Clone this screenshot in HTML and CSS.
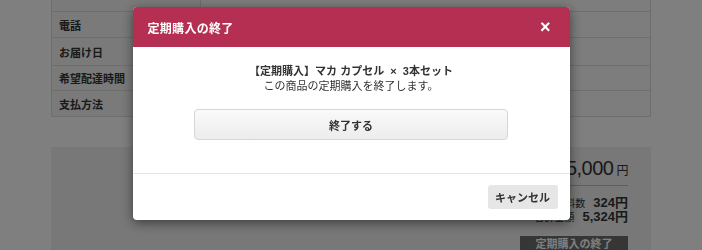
FILE: index.html
```html
<!DOCTYPE html>
<html lang="ja">
<head>
    <meta charset="UTF-8">
    <meta name="viewport" content="width=device-width, initial-scale=1.0">
    <title>定期購入の終了</title>
    <link rel="stylesheet" href="styles.css">
</head>
<body>
    <div class="page">
        <table class="info">
            <tr><th></th><td></td></tr>
            <tr><th>電話</th><td></td></tr>
            <tr class="tall"><th>お届け日</th><td></td></tr>
            <tr class="short"><th>希望配達時間</th><td></td></tr>
            <tr><th>支払方法</th><td></td></tr>
        </table>
        <div class="summary">
            <div class="sum-col">
                <div class="sum-total">
                    <span class="label">商品小計</span>
                    <span class="price">5,000<small>円</small></span>
                </div>
                <div class="sum-row"><span class="label">送料数</span><span class="amount">324円</span></div>
                <div class="sum-row"><span class="label">合計金額</span><span class="amount">5,324円</span></div>
                <button class="stop-btn">定期購入の終了</button>
            </div>
        </div>
    </div>

    <div class="overlay">
        <div class="modal">
            <div class="modal-header">
                <h2>定期購入の終了</h2>
                <button class="close">&times;</button>
            </div>
            <div class="modal-body">
                <p class="product">【定期購入】マカ カプセル &nbsp;× &nbsp;3本セット</p>
                <p class="note">この商品の定期購入を終了します。</p>
                <button class="confirm-btn">終了する</button>
            </div>
            <div class="modal-footer">
                <button class="cancel-btn">キャンセル</button>
            </div>
        </div>
    </div>
</body>
</html>
```

FILE: styles.css
```css
body {
    margin: 0;
    background: #fff;
    color: #333;
    font-family: "Liberation Sans", "Noto Sans CJK JP", sans-serif;
    font-size: 11px;
    height: 250px;
    overflow: hidden;
}
.page {
    width: 600px;
    margin: -15px 0 0 51px;
}
.info {
    width: 100%;
    border-collapse: collapse;
}
.info th, .info td {
    height: 25px;
    border: 1px solid #dcdcdc;
    padding: 0 7px;
}
.info .tall th, .info .tall td {
    height: 27px;
}
.info .short th, .info .short td {
    height: 24px;
}
.info th {
    width: 134px;
    background: #f5f5f5;
    text-align: left;
    font-weight: bold;
}
.info td {
    background: #fbfbfb;
}
.summary {
    margin-top: 30px;
    background: #f1f1f1;
    height: 104px;
    padding: 10px 23px 0 0;
    display: flex;
    justify-content: flex-end;
}
.sum-col {
    width: 260px;
    display: flex;
    flex-direction: column;
    align-items: flex-end;
}
.sum-total {
    align-self: stretch;
    display: flex;
    justify-content: space-between;
    align-items: baseline;
    border-bottom: 1px solid #bbb;
    padding-bottom: 5px;
    margin-bottom: 10px;
}
.price {
    font-size: 20px;
    letter-spacing: -0.5px;
}
.price small {
    font-size: 12px;
    margin-left: 3px;
}
.sum-row {
    display: flex;
    align-items: baseline;
    gap: 8px;
    line-height: 13px;
}
.sum-row .label {
    font-size: 10px;
}
.amount {
    font-size: 13px;
    font-weight: bold;
}
.stop-btn {
    margin-top: 12px;
    width: 108px;
    height: 17px;
    line-height: 15px;
    padding: 0;
    border: none;
    background: #6c6c6c;
    color: #fff;
    font-family: inherit;
    font-size: 11px;
    font-weight: bold;
}

.overlay {
    position: fixed;
    top: 0;
    left: 0;
    right: 0;
    bottom: 0;
    background: rgba(0, 0, 0, 0.5);
    display: flex;
    justify-content: center;
    align-items: flex-start;
    padding-top: 7px;
}
.modal {
    width: 437px;
    background: #fff;
    border-radius: 4px;
    box-shadow: 0 3px 12px rgba(0, 0, 0, 0.5);
    overflow: hidden;
}
.modal-header {
    height: 40px;
    background: #b52f52;
    display: flex;
    align-items: center;
    justify-content: space-between;
    padding: 0 19px 0 15px;
}
.modal-header h2 {
    margin: 0;
    color: #fff;
    font-size: 12px;
    font-weight: bold;
    letter-spacing: 0.3px;
}
.close {
    border: none;
    background: none;
    color: #fff;
    font-family: inherit;
    font-size: 18px;
    font-weight: bold;
    padding: 0;
    line-height: 1;
}
.modal-body {
    padding: 17px 0 33px;
    text-align: center;
}
.modal-body p {
    margin: 0;
    line-height: 15px;
    font-size: 11px;
}
.product {
    font-weight: bold;
}
.confirm-btn {
    margin-top: 15px;
    width: 314px;
    height: 31px;
    border: 1px solid #d6d6d6;
    border-radius: 4px;
    background: linear-gradient(#fafafa, #ececec);
    color: #333;
    font-family: inherit;
    font-size: 11px;
    font-weight: bold;
}
.modal-footer {
    border-top: 1px solid #e5e5e5;
    padding: 11px 12px;
    display: flex;
    justify-content: flex-end;
}
.cancel-btn {
    width: 70px;
    height: 24px;
    border: none;
    border-radius: 3px;
    background: #e6e6e6;
    color: #333;
    font-family: inherit;
    font-size: 11px;
    font-weight: bold;
}
```
